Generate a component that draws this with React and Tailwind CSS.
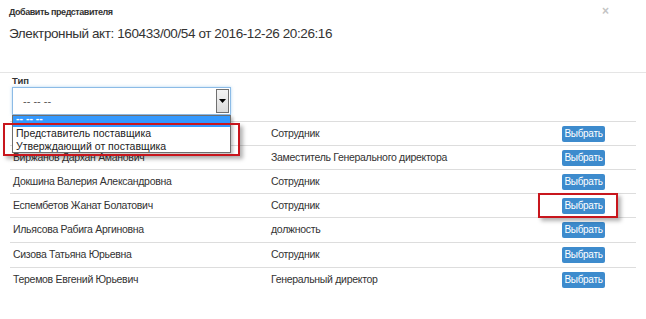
import React from 'react';

const rows = [
  { name: 'Абенов Серик Маратович', role: 'Сотрудник', h: 'h-[24px]' },
  { name: 'Биржанов Дархан Аманович', role: 'Заместитель Генерального директора', h: 'h-[24px]' },
  { name: 'Докшина Валерия Александровна', role: 'Сотрудник', h: 'h-[24px]' },
  { name: 'Еспембетов Жанат Болатович', role: 'Сотрудник', h: 'h-[24px]' },
  { name: 'Ильясова Рабига Аргиновна', role: 'должность', h: 'h-[25px]' },
  { name: 'Сизова Татьяна Юрьевна', role: 'Сотрудник', h: 'h-[25px]' },
  { name: 'Теремов Евгений Юрьевич', role: 'Генеральный директор', h: 'h-[24px]' },
];

function App() {
  return (
    <div className="relative w-[646px] h-[319px] overflow-hidden bg-white text-[#333] font-['Liberation_Sans',Arial,sans-serif]">
      {/* Шапка окна */}
      <div className="relative h-[73px] border-b border-[#e5e5e5] px-[9px] pt-[6px]">
        <div className="text-[9px] font-bold leading-[13px] tracking-[-0.45px]">Добавить представителя</div>
        <div className="mt-[7px] text-[13.5px] leading-[16px] tracking-[-0.4px]">
          Электронный акт: 160433/00/54 от 2016-12-26 20:26:16
        </div>
        <span className="absolute right-[37px] top-[5px] text-[12px] font-bold leading-[12px] text-[#c4c4c4]">×</span>
      </div>

      {/* Тело */}
      <div className="px-[10px]">
        <div className="pl-[2px] pt-[2px] text-[9.5px] font-bold leading-[12px]">Тип</div>
        <div className="ml-[2px] flex h-[28px] w-[219px] items-center border border-[#8cbbe6] bg-white shadow-[0_0_3px_rgba(102,175,233,0.5)]">
          <span className="flex-1 pl-[10px] text-[11px] text-[#555]">-- -- --</span>
          <div className="mr-[1px] flex h-[24px] w-[13px] items-center justify-center border border-[#707070] bg-gradient-to-b from-[#f4f4f4] to-[#dcdcdc]">
            <svg width="7" height="4" viewBox="0 0 7 4">
              <path d="M0 0h7L3.5 4z" fill="#000" />
            </svg>
          </div>
        </div>

        <div className="mt-[6px]">
          {rows.map((r, i) => (
            <div
              key={i}
              className={`flex items-center ${r.h} border-t border-[#dddddd] text-[10.5px] tracking-[-0.3px]`}
            >
              <span className="w-[261px] pl-[3px]">{r.name}</span>
              <span className="flex-1">{r.role}</span>
              <button className="mr-[31px] h-[16px] w-[43px] rounded-[2px] bg-[#3d8bcd] text-[10px] leading-[16px] text-white tracking-[-0.3px]">
                Выбрать
              </button>
            </div>
          ))}
        </div>
      </div>

      {/* Раскрытый список */}
      <div className="absolute left-[12px] top-[115px] w-[219px] h-[38px] overflow-hidden border border-[#6e6e6e] bg-white shadow-[2px_2px_3px_rgba(0,0,0,0.25)] text-[10.5px] leading-[13px] text-[#222]">
        <div className="h-[11px] overflow-hidden bg-[#3399ff] pl-[3px] text-white">
          <div className="-mt-[4px] font-bold">-- -- --</div>
        </div>
        <div className="pl-[3px]">Представитель поставщика</div>
        <div className="pl-[3px]">Утверждающий от поставщика</div>
      </div>

      {/* Пометки */}
      <div className="absolute left-[3px] top-[123px] h-[33px] w-[237px] border-2 border-[#c8161d] shadow-[3px_3px_4px_rgba(0,0,0,0.3)]" />
      <div className="absolute left-[538px] top-[193px] h-[25px] w-[80px] border-2 border-[#c8161d] shadow-[3px_3px_4px_rgba(0,0,0,0.3)]" />
    </div>
  );
}

export default App;
